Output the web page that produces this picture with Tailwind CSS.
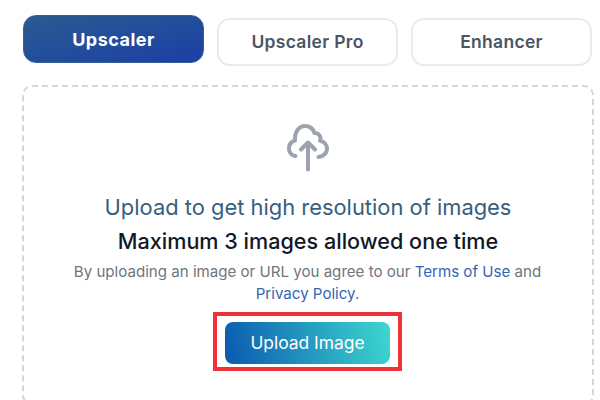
<!DOCTYPE html>
<html lang="en">
<head>
    <meta charset="UTF-8">
    <title>Upscaler</title>
    <script src="https://cdn.jsdelivr.net/npm/@tailwindcss/browser@4"></script>
</head>
<body class="w-[600px] h-[400px] overflow-hidden bg-white font-['Inter',sans-serif]">
    <div class="pl-[23px] pt-[15px]">
        <div class="flex items-start w-[570px]">
            <button class="w-[181px] h-[48px] rounded-[13px] bg-gradient-to-br from-[#2c5a90] to-[#1c3ea6] border border-[#3a5f96] text-white text-[18px] font-bold tracking-[0.5px]">Upscaler</button>
            <button class="w-[181px] h-[48px] mt-[3px] ml-[13px] pt-[1px] rounded-[13px] bg-white border-2 border-[#e8eaf0] text-[#4b5563] text-[17.5px] font-semibold tracking-[0.3px]">Upscaler Pro</button>
            <button class="w-[181px] h-[48px] mt-[3px] ml-[13px] pt-[1px] rounded-[13px] bg-white border-2 border-[#e8eaf0] text-[#4b5563] text-[17.5px] font-semibold tracking-[0.3px]">Enhancer</button>
        </div>
        <div class="mt-[19px] -ml-[1px] w-[572px] h-[320px] rounded-[10px] border-2 border-dashed border-[#d4d6da] flex flex-col items-center pt-[34px]">
            <svg class="w-[48px] h-[54px] text-[#9ca3af]" viewBox="0 0 48 54" fill="none" stroke="currentColor" stroke-width="4" stroke-linecap="round" stroke-linejoin="round">
                <path d="M11.5 35C7 34.5 5 31 5 27.5 5 23.5 7.5 20.5 11 19.5 10.5 10.5 15 5 21 5 25.5 5 29 7.5 30.5 12 33 11.5 36 13.5 36.5 17 36.5 18 36.5 19 36 19.8 40.5 20.5 43 24 43 28 43 32 39.5 35.5 34.5 36"/>
                <path d="M24 48.5V21.5M17 28.5 24 21.5 31 28.5"/>
            </svg>
            <p class="mt-[18px] text-[21.9px] leading-[28px] text-[#35607f]">Upload to get high resolution of images</p>
            <p class="mt-[6px] text-[21.6px] leading-[28px] font-medium text-[#111827]">Maximum 3 images allowed one time</p>
            <p class="mt-[6px] mr-[1px] w-[490px] text-center text-[15.1px] leading-[22px] text-[#71757c]">By uploading an image or URL you agree to our <a class="text-[#3565b5]">Terms of Use</a> and <a class="text-[#3565b5]">Privacy Policy</a>.</p>
            <div class="mt-[7px] mr-[1px] border-[4px] border-[#ee3338] px-[8px] pt-[6px] pb-[3px]">
                <button class="block w-[165px] h-[42px] rounded-[8px] bg-[linear-gradient(75deg,#0a58b0,#3dd9cf)] text-white text-[17.4px]">Upload Image</button>
            </div>
        </div>
    </div>
</body>
</html>
